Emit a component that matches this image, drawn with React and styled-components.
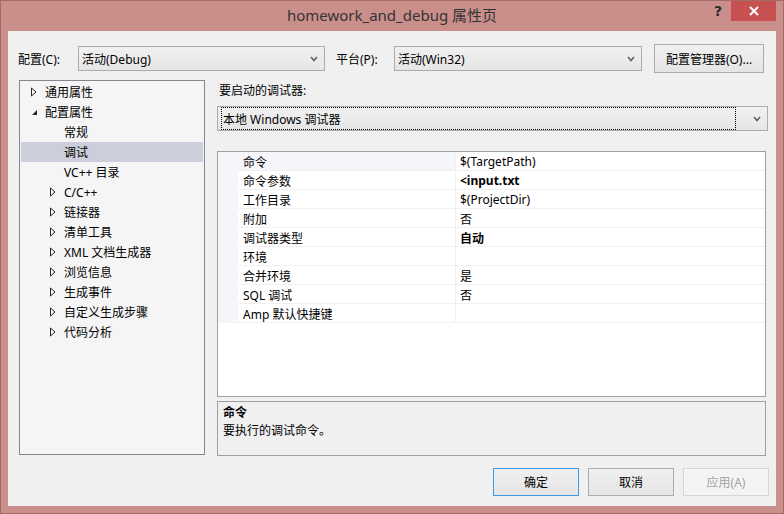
import React from 'react';
import styled, { createGlobalStyle } from 'styled-components';

const FONT = `"Noto Sans", "Noto Sans CJK SC", sans-serif`;

const Global = createGlobalStyle`
  html, body { margin: 0; padding: 0; }
  body { width: 784px; height: 514px; overflow: hidden; background: #cb8f8b; }
  * { box-sizing: border-box; }
`;

const Window = styled.div`
  width: 784px;
  height: 514px;
  background: #cb8f8b;
  border: 1px solid #a46b67;
  display: flex;
  flex-direction: column;
  font-family: ${FONT};
  font-size: 12px;
  color: #000;
`;

const TitleBar = styled.div`
  height: 30px;
  display: grid;
  grid-template-columns: 1fr auto 1fr;
  align-items: center;
`;

const Title = styled.div`
  grid-column: 2;
  font-size: 15px;
  color: #333;
  margin-bottom: 3px;
  white-space: nowrap;
`;

const Controls = styled.div`
  grid-column: 3;
  align-self: start;
  display: flex;
  justify-content: flex-end;
  margin-right: 7px;
`;

const HelpBtn = styled.div`
  width: 26px;
  height: 20px;
  display: flex;
  align-items: center;
  justify-content: center;
  font-weight: bold;
  font-size: 14px;
  color: #2a2a2a;
  font-family: "DejaVu Sans", sans-serif;
`;

const CloseBtn = styled.div`
  width: 45px;
  height: 20px;
  background: #c75050;
  display: flex;
  align-items: center;
  justify-content: center;
`;

const Client = styled.div`
  flex: 1;
  margin: 0 7px 7px 7px;
  background: #f0f0f0;
  display: flex;
  flex-direction: column;
`;

const TopRow = styled.div`
  margin-top: 13px;
  height: 29px;
  padding-left: 10px;
  display: flex;
  align-items: center;
`;

const Label = styled.div`
  width: ${p => p.$w}px;
  margin-left: ${p => p.$ml || 0}px;
  white-space: nowrap;
`;

const Combo = styled.div`
  width: ${p => p.$w}px;
  height: 25px;
  margin-top: ${p => p.$mt || 0}px;
  border: 1px solid #acacac;
  background: linear-gradient(#f1f1f1, #e6e6e6);
  display: flex;
  align-items: center;
  padding: 0 6px 0 3px;
  white-space: nowrap;
`;

const ComboText = styled.div`
  flex: 1;
  height: 100%;
  display: flex;
  align-items: center;
  padding-left: ${p => (p.$focus ? 1 : 0)}px;
  margin: ${p => (p.$focus ? '2px 17px 2px 0' : '0')};
  border: ${p => (p.$focus ? '1px dotted #000' : 'none')};
`;

const Button = styled.div`
  width: ${p => p.$w}px;
  height: ${p => p.$h || 28}px;
  margin-left: ${p => p.$ml || 0}px;
  border: 1px solid ${p => (p.$default ? '#3c9ae8' : p.$disabled ? '#d6d6d6' : '#acacac')};
  background: ${p => (p.$disabled ? '#f4f4f4' : 'linear-gradient(#f0f0f0, #e5e5e5)')};
  color: ${p => (p.$disabled ? '#a3a3a3' : '#000')};
  display: flex;
  align-items: center;
  justify-content: center;
  white-space: nowrap;
`;

const Main = styled.div`
  margin-top: 7px;
  padding-left: 11px;
  display: flex;
  gap: 12px;
`;

const Tree = styled.div`
  width: 186px;
  height: 375px;
  border: 1px solid #828790;
  background: #f5f5f5;
  padding: 1px;
`;

const TreeRow = styled.div`
  height: 20px;
  display: flex;
  align-items: center;
  padding-left: ${p => 10 + p.$level * 19}px;
  background: ${p => (p.$selected ? '#cccedb' : 'transparent')};
  white-space: nowrap;
`;

const Arrow = styled.div`
  width: 14px;
  height: 20px;
  display: flex;
  align-items: center;
`;

const RightCol = styled.div`
  width: 551px;
  display: flex;
  flex-direction: column;
`;

const FieldLabel = styled.div`
  height: 20px;
  display: flex;
  align-items: center;
  padding-left: 2px;
`;

const Grid = styled.div`
  margin-top: 20px;
  width: 549px;
  height: 246px;
  border: 1px solid #a0a0a0;
  background: #fff;
  display: grid;
  grid-template-columns: 20px 218px 1fr;
  grid-auto-rows: 19px;
  align-content: start;
`;

const Gutter = styled.div`
  background: #f4f6fa;
`;

const NameCell = styled.div`
  border-bottom: 1px solid #f0f0f0;
  border-right: 1px solid #f0f0f0;
  padding: 1px 0 0 5px;
  display: flex;
  align-items: center;
  background: ${p => (p.$selected ? '#f4f6fa' : '#fff')};
  white-space: nowrap;
`;

const ValueCell = styled.div`
  border-bottom: 1px solid #f0f0f0;
  padding: 1px 0 0 4px;
  display: flex;
  align-items: center;
  font-weight: ${p => (p.$bold ? 'bold' : 'normal')};
  white-space: nowrap;
`;

const Desc = styled.div`
  margin-top: 4px;
  width: 549px;
  height: 55px;
  border: 1px solid #a0a0a0;
  background: #f0f0f0;
  padding: 2px 0 0 5px;
  line-height: 18px;
`;

const DescTitle = styled.div`
  font-weight: bold;
`;

const ButtonRow = styled.div`
  margin-top: 12px;
  display: flex;
  justify-content: flex-end;
  gap: 9px;
  padding-right: 7px;
`;

const Chevron = () => (
  <svg width="8" height="6" viewBox="0 0 8 6">
    <path d="M1 1 L4 4.5 L7 1" fill="none" stroke="#606060" strokeWidth="1.6" />
  </svg>
);

const Collapsed = () => (
  <svg width="6" height="10" viewBox="0 0 6 10">
    <path d="M0.5 1 L5 5 L0.5 9 Z" fill="none" stroke="#262626" strokeWidth="1" />
  </svg>
);

const Expanded = () => (
  <svg width="7" height="7" viewBox="0 0 7 7">
    <path d="M6 1 L6 6 L1 6 Z" fill="#262626" />
  </svg>
);

const CloseX = () => (
  <svg width="10" height="10" viewBox="0 0 10 10">
    <path d="M1 1 L9 9 M9 1 L1 9" stroke="#fff" strokeWidth="2" />
  </svg>
);

const treeItems = [
  { label: '通用属性', level: 0, arrow: 'c' },
  { label: '配置属性', level: 0, arrow: 'e' },
  { label: '常规', level: 1 },
  { label: '调试', level: 1, selected: true },
  { label: 'VC++ 目录', level: 1 },
  { label: 'C/C++', level: 1, arrow: 'c' },
  { label: '链接器', level: 1, arrow: 'c' },
  { label: '清单工具', level: 1, arrow: 'c' },
  { label: 'XML 文档生成器', level: 1, arrow: 'c' },
  { label: '浏览信息', level: 1, arrow: 'c' },
  { label: '生成事件', level: 1, arrow: 'c' },
  { label: '自定义生成步骤', level: 1, arrow: 'c' },
  { label: '代码分析', level: 1, arrow: 'c' },
];

const props = [
  { name: '命令', value: '$(TargetPath)', selected: true },
  { name: '命令参数', value: '<input.txt', bold: true },
  { name: '工作目录', value: '$(ProjectDir)' },
  { name: '附加', value: '否' },
  { name: '调试器类型', value: '自动', bold: true },
  { name: '环境', value: '' },
  { name: '合并环境', value: '是' },
  { name: 'SQL 调试', value: '否' },
  { name: 'Amp 默认快捷键', value: '' },
];

export default function App() {
  return (
    <>
      <Global />
      <Window>
        <TitleBar>
          <Title>homework_and_debug 属性页</Title>
          <Controls>
            <HelpBtn>?</HelpBtn>
            <CloseBtn><CloseX /></CloseBtn>
          </Controls>
        </TitleBar>
        <Client>
          <TopRow>
            <Label $w={60}>配置(C):</Label>
            <Combo $w={247}>
              <ComboText>活动(Debug)</ComboText>
              <Chevron />
            </Combo>
            <Label $w={58} $ml={11}>平台(P):</Label>
            <Combo $w={248}>
              <ComboText>活动(Win32)</ComboText>
              <Chevron />
            </Combo>
            <Button $w={110} $h={29} $ml={12}>配置管理器(O)...</Button>
          </TopRow>
          <Main>
            <Tree>
              {treeItems.map(it => (
                <TreeRow key={it.label} $level={it.level} $selected={it.selected}>
                  <Arrow>
                    {it.arrow === 'c' && <Collapsed />}
                    {it.arrow === 'e' && <Expanded />}
                  </Arrow>
                  {it.label}
                </TreeRow>
              ))}
            </Tree>
            <RightCol>
              <FieldLabel>要启动的调试器:</FieldLabel>
              <Combo $w={551} $mt={6}>
                <ComboText $focus>本地 Windows 调试器</ComboText>
                <Chevron />
              </Combo>
              <Grid>
                {props.map(p => (
                  <React.Fragment key={p.name}>
                    <Gutter />
                    <NameCell $selected={p.selected}>{p.name}</NameCell>
                    <ValueCell $bold={p.bold}>{p.value}</ValueCell>
                  </React.Fragment>
                ))}
              </Grid>
              <Desc>
                <DescTitle>命令</DescTitle>
                <div>要执行的调试命令。</div>
              </Desc>
            </RightCol>
          </Main>
          <ButtonRow>
            <Button $w={86} $default>确定</Button>
            <Button $w={86}>取消</Button>
            <Button $w={86} $disabled>应用(A)</Button>
          </ButtonRow>
        </Client>
      </Window>
    </>
  );
}
